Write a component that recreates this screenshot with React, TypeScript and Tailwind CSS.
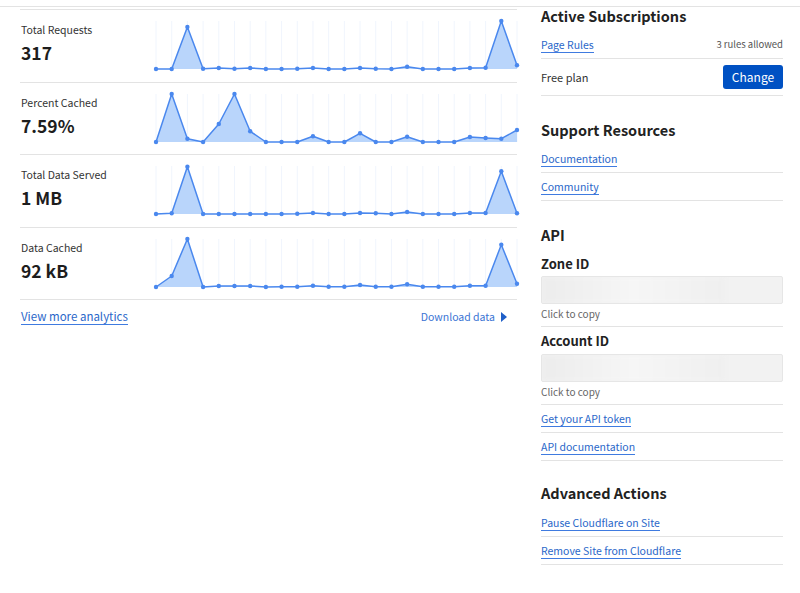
const STEP = 361 / 23;
const PLOT_H = 48;

type Metric = { label: string; value: string; data: number[] };

const metrics: Metric[] = [
  {
    label: "Total Requests",
    value: "317",
    data: [0, 0, 42, 0.3, 1, 0.3, 1, 0, 0, 0.3, 1, 0, 0, 1, 0.3, 0, 2.3, 0, 0, 0, 1, 1.3, 48, 3.7],
  },
  {
    label: "Percent Cached",
    value: "7.59%",
    data: [0, 48, 3.3, 0, 18, 48, 10.7, 0, 0, 0, 5.7, 0, 0, 8.7, 0, 0, 5.3, 0, 0, 0, 5, 4, 3.3, 12],
  },
  {
    label: "Total Data Served",
    value: "1 MB",
    data: [0, 0.7, 47.3, 0, 0, 0, 0, 0, 0, 0.3, 1, 0, 0, 1, 0.7, 0, 2, 0, 0, 0, 1, 1, 42.7, 0.7],
  },
  {
    label: "Data Cached",
    value: "92 kB",
    data: [0, 11, 48, 0, 1, 1, 1, 0, 0.3, 0.3, 1.3, 0.3, 0.3, 2, 0.3, 0.3, 2.7, 0.3, 0.3, 0.3, 1.3, 1.3, 42.3, 3.3],
  },
];

function Sparkline({ data }: { data: number[] }) {
  // 3px padding around the plot so dots don't clip
  const pad = 3;
  const pts = data.map((v, i) => [pad + i * STEP, pad + PLOT_H - v] as const);
  const line = pts.map(([x, y]) => `${x.toFixed(2)},${y.toFixed(2)}`).join(" ");
  const base = pad + PLOT_H;
  const area = `${pad},${base} ${line} ${pts[pts.length - 1][0].toFixed(2)},${base}`;
  return (
    <svg width={361 + pad * 2} height={PLOT_H + pad * 2} className="block">
      {pts.map(([x], i) => (
        <line key={i} x1={x} x2={x} y1={pad} y2={base} stroke="#f0f5fd" strokeWidth={1} />
      ))}
      <polygon points={area} fill="#b9d5fb" />
      <polyline points={line} fill="none" stroke="#4a88ee" strokeWidth={1.5} strokeLinejoin="round" />
      {pts.map(([x, y], i) => (
        <circle key={i} cx={x} cy={y} r={2.2} fill="#4a88ee" />
      ))}
    </svg>
  );
}

function MetricRow({ m }: { m: Metric }) {
  return (
    <div className="flex h-[72.5px] border-b border-[#e3e3e3]">
      <div className="w-[133px] shrink-0 pt-[12px] pl-[1px]">
        <div className="text-[10.5px] leading-[16px] text-[#333]">{m.label}</div>
        <div className="mt-[3px] text-[17.5px] leading-[24px] font-bold text-[#1d1d1d]">{m.value}</div>
      </div>
      <div className="mt-[8px] shrink-0">
        <Sparkline data={m.data} />
      </div>
    </div>
  );
}

function Link({ children }: { children: React.ReactNode }) {
  return (
    <span className="inline-block text-[10.5px] leading-[15px] text-[#2a67c9] border-b border-[#3f7be0]">
      {children}
    </span>
  );
}

function LinkRow({ children }: { children: React.ReactNode }) {
  return (
    <div className="flex h-[28px] items-center border-b border-[#e3e3e3]">
      <Link>{children}</Link>
    </div>
  );
}

function Heading({ children, className = "" }: { children: React.ReactNode; className?: string }) {
  return <h2 className={`text-[14.5px] leading-[20px] font-bold text-[#222] ${className}`}>{children}</h2>;
}

function IdBox() {
  return (
    <div className="flex h-[28px] overflow-hidden rounded-[2px] border border-[#e6e6e6] bg-[#f2f2f2]">
      <div className="h-full w-[183px] bg-gradient-to-r from-[#ececec] via-[#f6f6f6] to-[#efefef] blur-[2px]" />
    </div>
  );
}

export default function App() {
  return (
    <div
      className="w-[800px] h-[593px] overflow-hidden bg-white"
      style={{ fontFamily: '"Noto Sans CJK KR", "Noto Sans", sans-serif' }}
    >
      <div className="h-[7px] border-b border-[#e3e3e3]" />
      <div className="flex pl-[20px] pr-[17px]">
        {/* analytics column */}
        <div className="w-[497px] shrink-0 mt-[2px]">
          <div className="border-t border-[#e3e3e3]">
            {metrics.map((m) => (
              <MetricRow key={m.label} m={m} />
            ))}
          </div>
          <div className="flex items-center justify-between h-[34px] pl-[1px]">
            <span className="inline-block text-[11.5px] leading-[15px] text-[#2a67c9] border-b border-[#3f7be0]">
              View more analytics
            </span>
            <span className="flex items-center gap-[6px] pr-[10px] text-[10.5px] text-[#3a74d4]">
              Download data
              <svg width="6" height="10" viewBox="0 0 6 10">
                <path d="M0 0 L6 5 L0 10 Z" fill="#1f5fc8" />
              </svg>
            </span>
          </div>
        </div>

        {/* sidebar */}
        <div className="ml-[24px] w-[242px] shrink-0">
          <Heading className="-mt-[1px]">Active Subscriptions</Heading>
          <div className="mt-[5px] flex h-[28px] items-center justify-between border-b border-[#e3e3e3]">
            <Link>Page Rules</Link>
            <span className="text-[9.5px] text-[#555]">3 rules allowed</span>
          </div>
          <div className="flex h-[37px] items-center justify-between border-b border-[#e3e3e3]">
            <span className="text-[11px] text-[#333]">Free plan</span>
            <button className="h-[24px] w-[60px] rounded-[3px] bg-[#0051c3] text-[12px] text-white">
              Change
            </button>
          </div>

          <Heading className="mt-[24px] mb-[5px]">Support Resources</Heading>
          <LinkRow>Documentation</LinkRow>
          <LinkRow>Community</LinkRow>

          <Heading className="mt-[24px]">API</Heading>
          <div className="mt-[10px] text-[13px] leading-[18px] font-bold text-[#222]">Zone ID</div>
          <div className="mt-[3px]">
            <IdBox />
          </div>
          <div className="mt-[3px] pb-[5px] border-b border-[#e3e3e3] text-[10px] leading-[14px] text-[#666]">
            Click to copy
          </div>
          <div className="mt-[5px] text-[13px] leading-[18px] font-bold text-[#222]">Account ID</div>
          <div className="mt-[4px]">
            <IdBox />
          </div>
          <div className="mt-[3px] pb-[5px] border-b border-[#e3e3e3] text-[10px] leading-[14px] text-[#666]">
            Click to copy
          </div>
          <LinkRow>Get your API token</LinkRow>
          <LinkRow>API documentation</LinkRow>

          <Heading className="mt-[22px] mb-[6px]">Advanced Actions</Heading>
          <LinkRow>Pause Cloudflare on Site</LinkRow>
          <LinkRow>Remove Site from Cloudflare</LinkRow>
        </div>
      </div>
    </div>
  );
}
